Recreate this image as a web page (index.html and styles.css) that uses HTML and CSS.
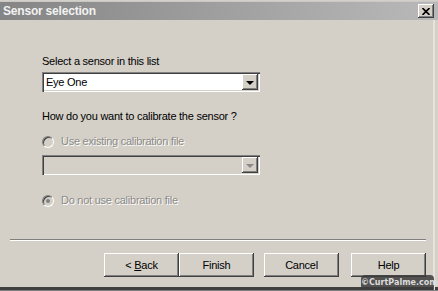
FILE: index.html
```html
<!DOCTYPE html>
<html lang="en">
<head>
    <meta charset="UTF-8">
    <meta name="viewport" content="width=device-width, initial-scale=1.0">
    <title>Sensor selection</title>
    <link rel="stylesheet" href="styles.css">
</head>
<body>
<div class="window">
    <header class="titlebar">
        <span class="title">Sensor selection</span>
        <span class="close-btn">
            <svg width="8" height="7" viewBox="0 0 8 7">
                <path d="M0.5 0 L7.5 7 M7.5 0 L0.5 7" stroke="#000" stroke-width="1.6" fill="none"/>
            </svg>
        </span>
    </header>

    <div class="dialog-body">
        <main class="content">
            <p class="label first">Select a sensor in this list</p>
            <div class="combo">
                <span class="combo-text">Eye One</span>
                <span class="combo-arrow"><span class="arrow"></span></span>
            </div>

            <p class="label second">How do you want to calibrate the sensor ?</p>
            <div class="radio-row disabled">
                <span class="radio"></span>
                <span>Use existing calibration file</span>
            </div>
            <div class="combo off">
                <span class="combo-text"></span>
                <span class="combo-arrow"><span class="arrow"></span></span>
            </div>

            <div class="radio-row disabled last">
                <span class="radio checked"></span>
                <span>Do not use calibration file</span>
            </div>
        </main>

        <footer class="buttons-area">
            <div class="separator"></div>
            <div class="buttons">
                <button class="btn">&lt; <u>B</u>ack</button>
                <button class="btn">Finish</button>
                <button class="btn gap">Cancel</button>
                <button class="btn gap-wide">Help</button>
            </div>
        </footer>
    </div>

    <!-- watermark over the corner -->
    <div class="watermark">&copy;CurtPalme.com</div>
</div>
</body>
</html>
```

FILE: styles.css
```css
* {
    margin: 0;
    padding: 0;
    box-sizing: border-box;
}

html, body {
    width: 438px;
    height: 291px;
    overflow: hidden;
}

body {
    background-color: #d4d0c8;
    font-family: "Liberation Sans", Arial, sans-serif;
    font-size: 11px;
    letter-spacing: -0.25px;
    color: #000;
}

.window {
    position: relative;
    width: 438px;
    height: 291px;
    display: flex;
    flex-direction: column;
    background-color: #d4d0c8;
    border-bottom: 1px solid #808080;
    box-shadow: inset 0 -3px 0 #404040;
}

/* Title bar */
.titlebar {
    height: 19px;
    margin-top: 1px;
    display: flex;
    align-items: center;
    justify-content: space-between;
    padding: 0 4px 0 3px;
    background: linear-gradient(to right, #858585, #b9b9b9);
    border-top: 1px solid #c8c8c8;
}

.title {
    color: #f2f2f2;
    font-weight: bold;
    font-size: 12px;
    letter-spacing: -0.2px;
}

.close-btn {
    width: 16px;
    height: 14px;
    display: flex;
    align-items: center;
    justify-content: center;
    background-color: #d4d0c8;
    box-shadow: inset -1px -1px 0 #404040, inset 1px 1px 0 #fff, inset -2px -2px 0 #808080;
}

.dialog-body {
    flex: 1;
    display: flex;
    flex-direction: column;
    margin-right: 3px;
    border-right: 2px solid #e6e3dc;
}

/* Main content */
.content {
    display: flex;
    flex-direction: column;
    padding-left: 42px;
}

.label {
    line-height: 13px;
}

.label.first {
    margin-top: 35px;
}

.label.second {
    margin-top: 18px;
}

.combo {
    margin-top: 4px;
    width: 218px;
    height: 20px;
    display: flex;
    align-items: center;
    justify-content: space-between;
    background-color: #fff;
    padding: 2px;
    box-shadow: inset 1px 1px 0 #808080, inset 2px 2px 0 #404040, inset -1px -1px 0 #fff, inset -2px -2px 0 #d4d0c8;
}

.combo.off {
    margin-top: 7px;
    background-color: #d4d0c8;
}

.combo-text {
    padding-left: 2px;
    line-height: 13px;
}

.combo-arrow {
    width: 16px;
    height: 16px;
    display: flex;
    align-items: center;
    justify-content: center;
    background-color: #d4d0c8;
    box-shadow: inset -1px -1px 0 #404040, inset 1px 1px 0 #fff, inset -2px -2px 0 #808080;
}

.arrow {
    width: 0;
    height: 0;
    border-left: 4px solid transparent;
    border-right: 4px solid transparent;
    border-top: 4px solid #000;
    margin-top: 1px;
}

.combo.off .arrow {
    border-top-color: #8a8a8a;
}

.radio-row {
    margin-top: 12px;
    display: flex;
    align-items: center;
    gap: 7px;
    line-height: 13px;
}

.radio-row.last {
    margin-top: 19px;
}

.radio-row.disabled {
    color: #8c8a86;
    text-shadow: 1px 1px 0 #fff;
}

.radio {
    width: 12px;
    height: 12px;
    border-radius: 50%;
    background-color: #d4d0c8;
    border: 1px solid;
    border-color: #808080 #fff #fff #808080;
    box-shadow: inset 1px 1px 0 #404040;
    display: flex;
    align-items: center;
    justify-content: center;
}

.radio.checked::after {
    content: "";
    width: 4px;
    height: 4px;
    border-radius: 50%;
    background-color: #808080;
}

/* Bottom buttons */
.buttons-area {
    margin-top: auto;
    padding: 0 7px 13px 10px;
}

.separator {
    height: 2px;
    border-top: 1px solid #808080;
    border-bottom: 1px solid #fff;
}

.buttons {
    display: flex;
    justify-content: flex-end;
    margin-top: 12px;
}

.btn {
    width: 75px;
    height: 24px;
    font-family: "Liberation Sans", Arial, sans-serif;
    font-size: 11px;
    letter-spacing: -0.25px;
    background-color: #d4d0c8;
    color: #000;
    border: none;
    box-shadow: inset -1px -1px 0 #404040, inset 1px 1px 0 #fff, inset -2px -2px 0 #808080;
}

.btn.gap {
    margin-left: 10px;
}

.btn.gap-wide {
    margin-left: 12px;
}

.watermark {
    position: absolute;
    right: 4px;
    bottom: 0;
    width: 73px;
    height: 15px;
    border-radius: 4px 4px 0 0;
    background-color: rgba(60, 60, 60, 0.85);
    color: #dcdcdc;
    font-family: "DejaVu Sans", sans-serif;
    font-size: 8px;
    font-weight: bold;
    letter-spacing: 0;
    text-align: center;
    line-height: 15px;
}
```
